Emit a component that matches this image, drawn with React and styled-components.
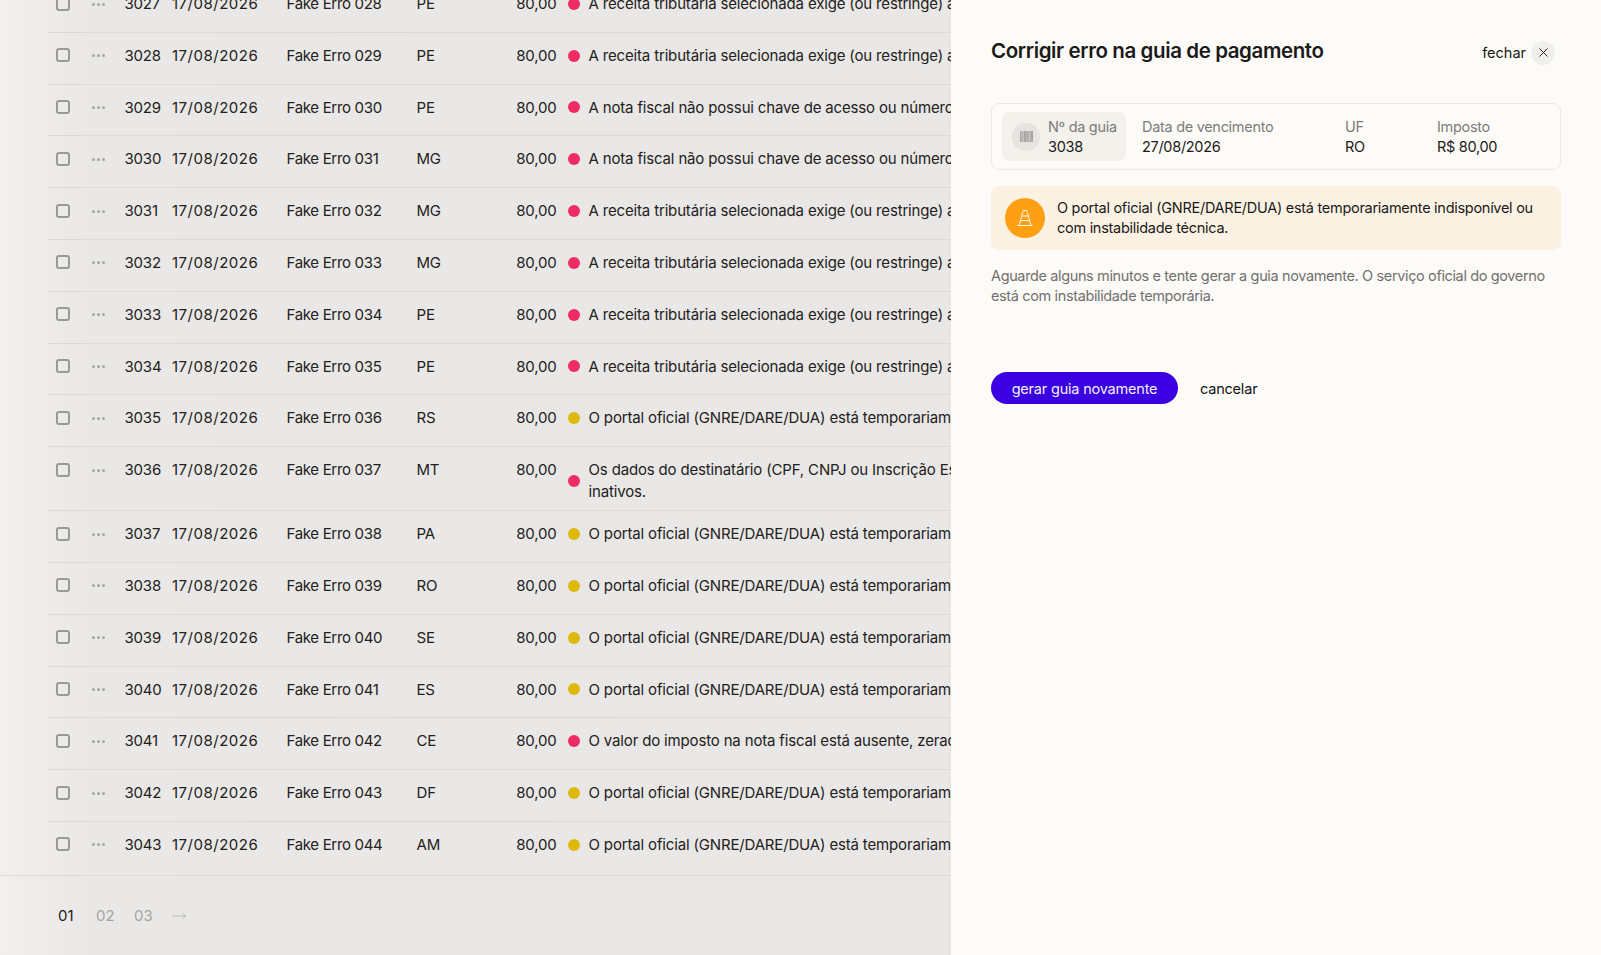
import styled, { createGlobalStyle } from "styled-components";
import { X, MoveRight } from "lucide-react";

const GlobalStyle = createGlobalStyle`
  html, body {
    margin: 0;
    height: 100%;
    overflow: hidden;
    font-family: "Inter", "Liberation Sans", sans-serif;
  }
  * { box-sizing: border-box; }
`;

const Page = styled.div`
  position: relative;
  height: 100vh;
  overflow: hidden;
  background: linear-gradient(90deg, #f1f0ee 0, #e9e8e6 90px, #e8e7e5 100%);
`;

const List = styled.div`
  width: 951px;
  margin-top: -19px;
  padding-left: 48px;
  overflow: hidden;
`;

const Row = styled.div`
  display: grid;
  grid-template-columns: 44px 32.5px 47.5px 114.5px 130px 70px 70px 1fr;
  align-items: start;
  width: 1452px;
  min-height: 51.8px;
  padding: 12px 0 8px;
  border-bottom: ${(p) => (p.$last ? "none" : "1px solid #dbdad8")};
  font-size: 15px;
  line-height: 21.5px;
  letter-spacing: -0.2px;
  color: #232120;
`;

const CheckCell = styled.div`
  display: flex;
  align-items: center;
  height: 21px;
  padding-left: 8px;
`;

const Checkbox = styled.span`
  width: 14px;
  height: 14px;
  border: 2px solid #9a9997;
  border-radius: 3px;
`;

const DotsCell = styled.div`
  display: flex;
  align-items: center;
  gap: 2px;
  height: 22px;
`;

const MiniDot = styled.span`
  width: 3px;
  height: 3px;
  border-radius: 50%;
  background: #a6a5a3;
`;

const DateCell = styled.div`
  letter-spacing: 0.5px;
`;

const NameCell = styled.div`
  letter-spacing: -0.32px;
`;

const Amount = styled.div`
  text-align: right;
`;

const Message = styled.div`
  display: flex;
  align-items: center;
  gap: 9px;
  padding-left: 11px;
  max-width: 822px;
  letter-spacing: -0.16px;
`;

const StatusDot = styled.span`
  flex: none;
  width: 12px;
  height: 12px;
  border-radius: 50%;
  background: ${(p) => (p.$tone === "warn" ? "#dfb80c" : "#ef2b63")};
`;

const Footer = styled.div`
  display: flex;
  align-items: center;
  gap: 21px;
  height: 81px;
  margin-top: 1px;
  padding: 0 0 0 58px;
  border-top: 1px solid #dbdad8;
  font-size: 15px;
`;

const PageNum = styled.span`
  flex: none;
  width: 17px;
  color: ${(p) => (p.$active ? "#1e1c1b" : "#a5a4a2")};
`;

const ArrowIcon = styled(MoveRight)`
  color: #a5a4a2;
  margin-left: -1px;
`;

const Drawer = styled.aside`
  position: absolute;
  top: 0;
  right: 0;
  bottom: 0;
  width: 650px;
  padding: 36px 40px 0;
  background: #fcfbf8;
`;

const DrawerHeader = styled.header`
  display: flex;
  align-items: center;
  justify-content: space-between;
  height: 30px;
  margin-right: 6px;
`;

const Title = styled.h2`
  margin: 0;
  font-size: 20.5px;
  line-height: 30px;
  font-weight: 600;
  letter-spacing: -0.4px;
  color: #1b1a19;
`;

const CloseArea = styled.div`
  display: flex;
  align-items: center;
  gap: 5px;
  margin-top: 3px;
  font-size: 14.5px;
  color: #1b1a19;
`;

const CloseButton = styled.button`
  display: flex;
  align-items: center;
  justify-content: center;
  width: 24px;
  height: 24px;
  padding: 0;
  border: 0;
  border-radius: 50%;
  background: #f0efea;
  color: #1b1a19;
`;

const InfoCard = styled.div`
  display: flex;
  align-items: center;
  height: 67px;
  margin-top: 37px;
  padding-left: 10px;
  border: 1px solid #eceae6;
  border-radius: 8px;
`;

const GuideBox = styled.div`
  display: flex;
  align-items: center;
  gap: 8px;
  width: 124px;
  height: 49px;
  padding-left: 10px;
  background: #f3f1ec;
  border-radius: 8px;
`;

const BarcodeCircle = styled.span`
  display: flex;
  align-items: center;
  justify-content: center;
  width: 28px;
  height: 28px;
  border-radius: 50%;
  background: #e6e4df;
`;

const Field = styled.div`
  width: ${(p) => p.$width || "auto"};
  margin-left: ${(p) => p.$offset || "0"};
  font-size: 14.5px;
  line-height: 20px;
  letter-spacing: -0.3px;
`;

const FieldLabel = styled.div`
  color: #7d7b79;
`;

const FieldValue = styled.div`
  color: #1b1a19;
`;

const Alert = styled.div`
  display: flex;
  align-items: center;
  gap: 12px;
  height: 64px;
  margin-top: 16px;
  padding: 0 14px;
  background: #fcf2e4;
  border-radius: 8px;
  font-size: 14.5px;
  line-height: 20px;
  letter-spacing: -0.28px;
  color: #1b1a19;
`;

const AlertIcon = styled.span`
  flex: none;
  display: flex;
  align-items: center;
  justify-content: center;
  width: 40px;
  height: 40px;
  border-radius: 50%;
  background: #ff9f14;
`;

const Help = styled.p`
  margin: 16px 0 0;
  font-size: 14.5px;
  line-height: 20px;
  letter-spacing: -0.37px;
  color: #72706e;
`;

const Actions = styled.div`
  display: flex;
  align-items: center;
  gap: 22px;
  margin-top: 66px;
`;

const PrimaryButton = styled.button`
  width: 187px;
  height: 32px;
  padding: 0;
  border: 0;
  border-radius: 16px;
  background: #3a00e1;
  color: #f3efff;
  font: inherit;
  font-size: 14.5px;
  letter-spacing: -0.2px;
`;

const TextButton = styled.button`
  padding: 0;
  border: 0;
  background: none;
  color: #141312;
  font: inherit;
  font-size: 14.5px;
  letter-spacing: -0.2px;
`;

const receita = "A receita tributária selecionada exige (ou restringe) a inscrição estadual do destinatário.";
const nota = "A nota fiscal não possui chave de acesso ou número de documento válido.";
const portal = "O portal oficial (GNRE/DARE/DUA) está temporariamente indisponível ou com instabilidade técnica.";
const dados = "Os dados do destinatário (CPF, CNPJ ou Inscrição Estadual) estão incompletos, incorretos ou constam como inativos.";
const valor = "O valor do imposto na nota fiscal está ausente, zerado ou divergente do cálculo.";

const rows = [
  [3027, "028", "PE", receita],
  [3028, "029", "PE", receita],
  [3029, "030", "PE", nota],
  [3030, "031", "MG", nota],
  [3031, "032", "MG", receita],
  [3032, "033", "MG", receita],
  [3033, "034", "PE", receita],
  [3034, "035", "PE", receita],
  [3035, "036", "RS", portal, "warn"],
  [3036, "037", "MT", dados],
  [3037, "038", "PA", portal, "warn"],
  [3038, "039", "RO", portal, "warn"],
  [3039, "040", "SE", portal, "warn"],
  [3040, "041", "ES", portal, "warn"],
  [3041, "042", "CE", valor],
  [3042, "043", "DF", portal, "warn"],
  [3043, "044", "AM", portal, "warn"],
];

function BarcodeIcon() {
  const bars = [0, 1.5, 2.6, 4, 5, 6.4, 7.4, 8.4, 9.8, 11, 12];
  return (
    <svg width="13" height="11" viewBox="0 0 13 11" aria-hidden="true">
      {bars.map((x) => (
        <rect key={x} x={x} y="0" width="0.8" height="11" fill="#989693" />
      ))}
    </svg>
  );
}

function ConeIcon() {
  return (
    <svg width="20" height="20" viewBox="0 0 20 20" fill="none" stroke="#fff6e6" strokeWidth="1" aria-hidden="true">
      <path d="M8.2 2.5h3.6L16 17.5H4z" />
      <path d="M6.8 8h6.4M5.4 12.5h9.2" />
      <path d="M2.5 17.5h15" />
    </svg>
  );
}

export default function App() {
  return (
    <>
      <GlobalStyle />
      <Page>
        <List>
          {rows.map(([id, name, uf, text, tone], i) => (
            <Row key={id} $last={i === rows.length - 1}>
              <CheckCell>
                <Checkbox />
              </CheckCell>
              <DotsCell>
                <MiniDot />
                <MiniDot />
                <MiniDot />
              </DotsCell>
              <div>{id}</div>
              <DateCell>17/08/2026</DateCell>
              <NameCell>Fake Erro {name}</NameCell>
              <div>{uf}</div>
              <Amount>80,00</Amount>
              <Message>
                <StatusDot $tone={tone} />
                <span>{text}</span>
              </Message>
            </Row>
          ))}
        </List>
        <Footer>
          <PageNum $active>01</PageNum>
          <PageNum>02</PageNum>
          <PageNum>03</PageNum>
          <ArrowIcon size={16} strokeWidth={1} />
        </Footer>
        <Drawer>
          <DrawerHeader>
            <Title>Corrigir erro na guia de pagamento</Title>
            <CloseArea>
              fechar
              <CloseButton aria-label="fechar">
                <X size={15} strokeWidth={1.5} />
              </CloseButton>
            </CloseArea>
          </DrawerHeader>
          <InfoCard>
            <GuideBox>
              <BarcodeCircle>
                <BarcodeIcon />
              </BarcodeCircle>
              <Field>
                <FieldLabel>Nº da guia</FieldLabel>
                <FieldValue>3038</FieldValue>
              </Field>
            </GuideBox>
            <Field $width="203px" $offset="16px">
              <FieldLabel>Data de vencimento</FieldLabel>
              <FieldValue>27/08/2026</FieldValue>
            </Field>
            <Field $width="92px">
              <FieldLabel>UF</FieldLabel>
              <FieldValue>RO</FieldValue>
            </Field>
            <Field>
              <FieldLabel>Imposto</FieldLabel>
              <FieldValue>R$ 80,00</FieldValue>
            </Field>
          </InfoCard>
          <Alert>
            <AlertIcon>
              <ConeIcon />
            </AlertIcon>
            <span>O portal oficial (GNRE/DARE/DUA) está temporariamente indisponível ou com instabilidade técnica.</span>
          </Alert>
          <Help>
            Aguarde alguns minutos e tente gerar a guia novamente. O serviço oficial do governo está com instabilidade temporária.
          </Help>
          <Actions>
            <PrimaryButton>gerar guia novamente</PrimaryButton>
            <TextButton>cancelar</TextButton>
          </Actions>
        </Drawer>
      </Page>
    </>
  );
}
